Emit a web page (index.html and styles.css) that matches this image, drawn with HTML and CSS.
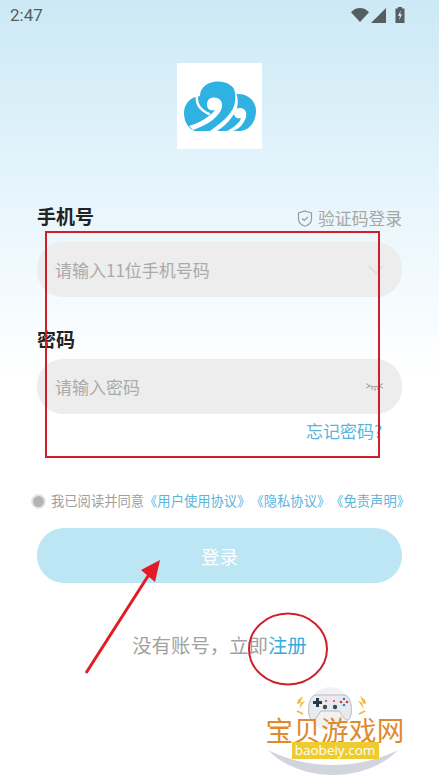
FILE: index.html
```html
<!DOCTYPE html>
<html lang="zh-CN">
  <head>
    <meta charset="UTF-8" />
    <meta name="viewport" content="width=device-width, initial-scale=1.0" />
    <title>登录</title>
    <link rel="stylesheet" href="styles.css">
  </head>
  <body>
    <div class="screen">
      <div class="status-bar">
        <span class="time">2:47</span>
        <div class="status-icons">
          <svg width="18" height="14" viewBox="0 0 18 14"><path class="status-fill" d="M0 4.2C2.4 1.6 5.6 0 9 0s6.600 1.600 9 4.200L9 14z" /></svg>
          <svg width="16" height="15" viewBox="0 0 16 15"><path class="status-fill" d="M0 15 15 0v15z" /></svg>
          <svg class="battery" width="10" height="16" viewBox="0 0 10 16"><path class="status-fill" fill-rule="evenodd" d="M3 0h4v1.500h2.500V16H.500V1.500H3zM5.800 3 3 9h1.800l-.6 4.500L7 7.200H5.200z" /></svg>
        </div>
      </div>

      <div class="logo">
        <svg width="85" height="86" viewBox="0 0 85 86">
          <path class="cloud" d="M18 68C11 66 7 58 7 50 7 41 13 34 23 33 23 25 30 18.500 41 18.500 51 18.500 58 24 59 31 71 30 79 38 79 48 79 58 73 68 62 68z" />
          <path class="cloud-cut" d="M12 63C22 60 33 54 38 47 33 48 30 46 30 41.500 30 37 33 34.500 37 34.500 43 34.500 46 39 45 44 43 54 30 62 16 67z" />
          <path class="cloud-cut" d="M50 68C58 64 63 59 64 55 60 56 57 54 57 50.500 57 47 60 45 63 45 68 45 70 49 69 54 67 61 62 66 56 68z" />
          <path class="cloud-cut" d="M33 68C44 60 54 52 57 43 59 36 59 30 56 24 60 30 62 37 60 45 56 55 48 63 40 68z" />
          <path class="cloud-line" d="M20 33C19 41 23 47 32 51" />
        </svg>
      </div>

      <form class="login-form">
        <div class="label-row">
          <label class="field-label">手机号</label>
          <a class="code-login">
            <svg width="16" height="17" viewBox="0 0 16 17"><path class="line-icon" d="M8 1 14.500 3v6c0 3.500-3 6-6.500 7.200C4.500 15 1.500 12.500 1.500 9V3z" /><path class="line-icon" d="M5 8.500 7.300 10.500 11 7" /></svg>
            验证码登录
          </a>
        </div>
        <div class="field">
          <input type="text" placeholder="请输入11位手机号码" />
          <svg width="16" height="9" viewBox="0 0 16 9"><path class="pale-line" d="M1 1 8 8l7-7" /></svg>
        </div>

        <label class="field-label password-label">密码</label>
        <div class="field">
          <input type="password" placeholder="请输入密码" />
          <svg width="19" height="10" viewBox="0 0 19 10"><path class="eye-line" d="M1 1.500 5 4 1 6M18 1.500 14 4l4 2M4 3.500c3 1.500 8 1.500 11 0M7 5v3M10 5.500V9M13 5v3" /></svg>
        </div>
        <a class="forgot">忘记密码?</a>

        <div class="agree">
          <span class="radio"></span>
          <span>我已阅读并同意</span>
          <a>《用户使用协议》</a><a>《隐私协议》</a><a>《免责声明》</a>
        </div>

        <button type="button" class="login-button">登录</button>
        <p class="register">没有账号，立即<a>注册</a></p>
      </form>

      <!-- screenshot annotations -->
      <svg class="marks" width="439" height="780" viewBox="0 0 439 780">
        <rect x="46" y="232" width="333" height="225" />
        <ellipse cx="288" cy="649" rx="39" ry="35.500" />
        <path d="M86 673 150 573" />
        <path class="arrow-head" d="M160 560 141 570 155 582z" />
      </svg>

      <div class="watermark">
        <svg class="pad" width="90" height="44" viewBox="0 0 90 44">
          <circle cx="42" cy="23" r="22" fill="#f1f1f3" />
          <path d="M10 14 15 10 12 17 17 15 11 23 13 17 9 18z" fill="#f0b93a" />
          <path d="M77 14 72 10 75 17 70 15 76 23 74 17 78 18z" fill="#f0b93a" />
          <path d="M9 25 15 28M77 25 71 28" stroke="#f0b93a" stroke-width="1.500" />
          <path d="M29 9h26c5 0 7 4 8 10 1 6 0 14-3 15-3 1-6-5-9-9H33c-3 4-6 10-9 9-3-1-4-9-3-15 1-6 3-10 8-10z" fill="#e9eaee" stroke="#b9bbc2" />
          <path d="M28 12h3v3h3v3h-3v3h-3v-3h-3v-3h3z" fill="#1f3d4d" />
          <circle cx="56" cy="13" r="1.300" fill="#2f7fd0" />
          <circle cx="56" cy="19" r="1.300" fill="#2f7fd0" />
          <circle cx="53" cy="16" r="1.300" fill="#d83a3a" />
          <circle cx="59" cy="16" r="1.300" fill="#d83a3a" />
          <circle cx="37" cy="21" r="2.200" fill="#33505e" />
          <circle cx="47" cy="21" r="2.200" fill="#33505e" />
          <path d="M37 15h2M45 15h2" stroke="#d83a3a" stroke-width="1.500" />
        </svg>
        <svg class="wm-arc" width="130" height="26" viewBox="0 0 130 26"><path d="M0 0C20 10 42 15 65 15S110 10 130 0C115 16 90 25 65 25S15 16 0 0z" fill="#d3d5de" /></svg>
        <div class="wm-title">宝贝游戏网</div>
        <div class="wm-tag">baobeiy.com</div>
      </div>
    </div>
  </body>
</html>
```

FILE: styles.css
```css
* {
  margin: 0;
  padding: 0;
  box-sizing: border-box;
  font-family: "Noto Sans CJK SC", "Liberation Sans", sans-serif;
  text-spacing-trim: space-all;
}

body {
  background-color: #fff;
}

.screen {
  position: relative;
  width: 439px;
  height: 780px;
  overflow: hidden;
  background: linear-gradient(to bottom, #cce9f5 0, #e6f5fc 190px, #fff 375px);
}

.status-bar {
  height: 30px;
  padding: 0 34px 0 10px;
  display: flex;
  justify-content: space-between;
  align-items: center;
}

.time {
  font-family: Roboto, sans-serif;
  font-size: 17px;
  color: #555e62;
}

.status-icons {
  display: flex;
  align-items: center;
  gap: 2px;
}

.status-fill {
  fill: #555e62;
}

.battery {
  margin-left: 6px;
}

.logo {
  width: 85px;
  height: 86px;
  margin: 33px auto 0;
  background-color: #fff;
}

.cloud {
  fill: #2fb1e2;
}

.cloud-cut {
  fill: #fff;
}

.cloud-line {
  fill: none;
  stroke: #fff;
  stroke-width: 2.500;
  stroke-linecap: round;
}

.login-form {
  padding: 0 37px;
}

.label-row {
  display: flex;
  justify-content: space-between;
  align-items: center;
  margin-top: 54px;
  height: 26px;
}

.field-label {
  display: block;
  font-size: 19px;
  font-weight: bold;
  color: #222;
  line-height: 26px;
}

.password-label {
  margin-top: 29px;
}

.code-login {
  display: flex;
  align-items: center;
  gap: 5px;
  font-size: 16.800px;
  color: #a6a6a6;
  position: relative;
  top: 2px;
}

.line-icon {
  fill: none;
  stroke: #9a9a9a;
  stroke-width: 1.200;
}

.field {
  height: 55px;
  margin-top: 13px;
  padding: 0 18px;
  display: flex;
  align-items: center;
  justify-content: space-between;
  background-color: #ededed;
  border-radius: 26px;
}

.password-label + .field {
  margin-top: 7px;
}

.field input {
  flex: 1;
  border: none;
  outline: none;
  background: none;
  font-size: 17px;
  color: #333;
}

.field input::placeholder {
  color: #aaa;
  opacity: 1;
}

.pale-line {
  fill: none;
  stroke: #dcdcdc;
  stroke-width: 1.500;
}

.eye-line {
  fill: none;
  stroke: #9c9c9c;
  stroke-width: 1;
}

.forgot {
  display: block;
  margin-top: 5px;
  padding-right: 20px;
  text-align: right;
  font-size: 17px;
  line-height: 24px;
  color: #58b4dc;
}

.agree {
  display: flex;
  align-items: center;
  margin-top: 48px;
  margin-left: -6px;
  font-size: 13.300px;
  line-height: 20px;
  color: #a0a0a0;
  white-space: nowrap;
}

.agree span,
.agree a {
  flex: none;
}

.radio {
  width: 15px;
  height: 15px;
  margin-right: 5px;
  border-radius: 50%;
  background-color: #b4b4b4;
  border: 2px solid #e4e6ea;
}

.agree a {
  color: #5ab5da;
}

.login-button {
  display: block;
  width: 100%;
  height: 55px;
  margin-top: 17px;
  border: none;
  border-radius: 27px;
  background-color: #bde6f5;
  color: #fff;
  font-size: 18.500px;
}

.register {
  margin-top: 47px;
  text-align: center;
  font-size: 19.400px;
  line-height: 30px;
  color: #a2a2a2;
}

.register a {
  color: #36acdc;
}

.marks {
  position: absolute;
  left: 0;
  top: 0;
  pointer-events: none;
}

.marks rect,
.marks ellipse,
.marks path {
  fill: none;
  stroke: #cf1f2b;
  stroke-width: 2;
}

.marks path {
  stroke: #e31b23;
  stroke-width: 3;
}

.marks .arrow-head {
  fill: #e31b23;
  stroke: none;
}

.watermark {
  position: absolute;
  left: 265px;
  top: 686px;
  width: 140px;
  height: 92px;
  display: flex;
  flex-direction: column;
  align-items: center;
}

.pad {
  position: absolute;
  left: 23px;
  top: 0;
}

.wm-arc {
  position: absolute;
  left: 3px;
  top: 64px;
}

.wm-title {
  position: relative;
  margin-top: 30px;
  font-size: 27.500px;
  line-height: 26px;
  letter-spacing: 0.300px;
  white-space: nowrap;
  color: #df8a2d;
}

.wm-tag {
  position: relative;
  width: 87px;
  height: 17px;
  background-color: #eecb2f;
  text-align: center;
  font-family: "Open Sans", sans-serif;
  font-size: 13.500px;
  line-height: 17px;
  color: #fff;
}
```
